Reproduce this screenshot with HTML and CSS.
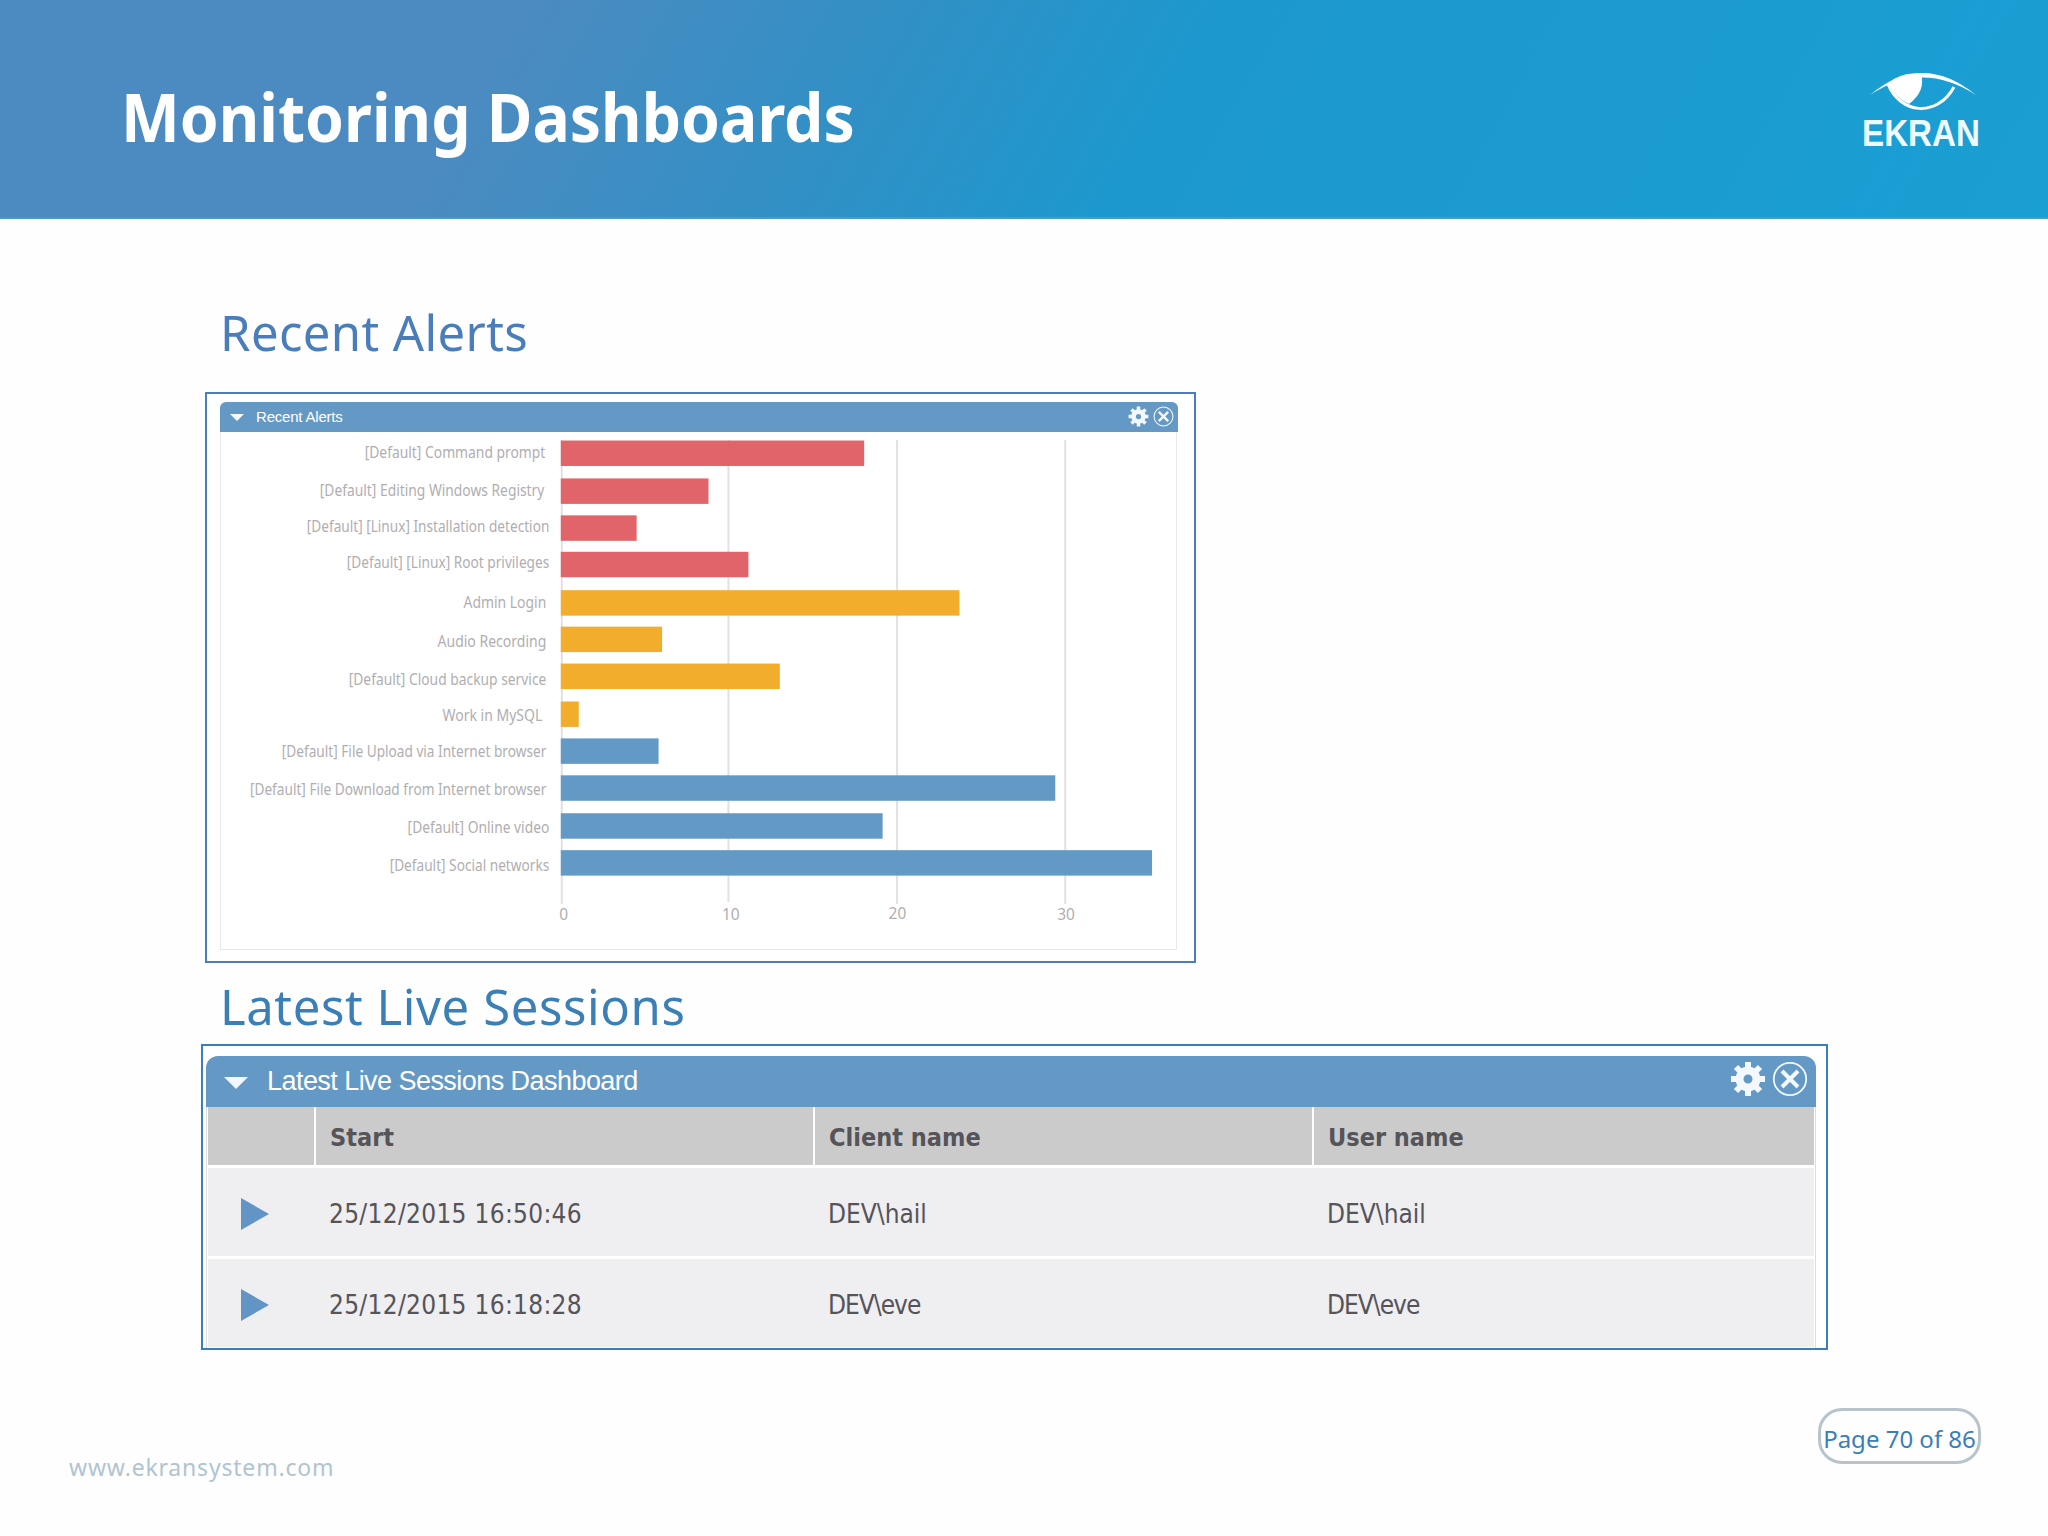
FILE: index.html
```html
<!DOCTYPE html>
<html lang="en">
<head>
    <meta charset="UTF-8">
    <title>Monitoring Dashboards</title>
    <link rel="stylesheet" href="styles.css">
</head>
<body>

<header class="header">
    <h1 class="title">Monitoring Dashboards</h1>
    <svg class="logo" width="124" height="96" viewBox="0 0 124 96">
        <path d="M11 26 Q63 -18 117 26 Q63 -9 11 26Z" fill="#fff"/>
        <path d="M29 14 Q44 2 62 5 Q67 22 50 35 Q37 30 29 14Z" fill="#fff"/>
        <path d="M29 15 C41 45 78 49 95 18" fill="none" stroke="#fff" stroke-width="3"/>
        <text x="3" y="77" textLength="118" lengthAdjust="spacingAndGlyphs">EKRAN</text>
    </svg>
</header>

<main class="content">
    <h2 class="subtitle alerts-title">Recent Alerts</h2>
    <section class="frame alerts">
        <div class="bar bar-small">
            <span class="caret"></span>
            <span class="bar-title">Recent Alerts</span>
            <svg class="icon" viewBox="0 0 36 36">
                <use href="#gear"/>
            </svg>
            <svg class="icon" viewBox="0 0 36 36">
                <use href="#close"/>
            </svg>
        </div>
        <svg class="chart" width="957" height="518" viewBox="220 432 957 518">
            <g class="grid">
                <path d="M561.5 440V905M728.5 440V903M897.5 440V905M1066 440V905"/>
            </g>
            <g fill="#e06469">
                <rect x="560.5" y="440.5" width="304" height="25.5"/>
                <rect x="560.5" y="478.5" width="148" height="25.5"/>
                <rect x="560.5" y="515.5" width="76" height="25.5"/>
                <rect x="560.5" y="552" width="188" height="25.5"/>
            </g>
            <g fill="#f2ad2c">
                <rect x="560.5" y="590.5" width="399.5" height="25.5"/>
                <rect x="560.5" y="627" width="101.5" height="25.5"/>
                <rect x="560.5" y="664" width="219.5" height="25.5"/>
                <rect x="560.5" y="702" width="18" height="25.5"/>
            </g>
            <g fill="#6399c5">
                <rect x="560.5" y="739" width="98" height="25.5"/>
                <rect x="560.5" y="776" width="495.5" height="25.5"/>
                <rect x="560.5" y="814" width="322.5" height="25.5"/>
                <rect x="560.5" y="851" width="592.5" height="25.5"/>
            </g>
            <g class="labels">
                <text x="364" y="458" textLength="181" lengthAdjust="spacingAndGlyphs">[Default] Command prompt</text>
                <text x="319" y="496" textLength="225" lengthAdjust="spacingAndGlyphs">[Default] Editing Windows Registry</text>
                <text x="306" y="532" textLength="243" lengthAdjust="spacingAndGlyphs">[Default] [Linux] Installation detection</text>
                <text x="346" y="568" textLength="203" lengthAdjust="spacingAndGlyphs">[Default] [Linux] Root privileges</text>
                <text x="463" y="608" textLength="83" lengthAdjust="spacingAndGlyphs">Admin Login</text>
                <text x="437" y="647" textLength="109" lengthAdjust="spacingAndGlyphs">Audio Recording</text>
                <text x="348" y="685" textLength="198" lengthAdjust="spacingAndGlyphs">[Default] Cloud backup service</text>
                <text x="442" y="722" textLength="100" lengthAdjust="spacingAndGlyphs">Work in MySQL</text>
                <text x="281" y="758" textLength="265" lengthAdjust="spacingAndGlyphs">[Default] File Upload via Internet browser</text>
                <text x="249" y="796" textLength="297" lengthAdjust="spacingAndGlyphs">[Default] File Download from Internet browser</text>
                <text x="407" y="834" textLength="142" lengthAdjust="spacingAndGlyphs">[Default] Online video</text>
                <text x="389" y="872" textLength="160" lengthAdjust="spacingAndGlyphs">[Default] Social networks</text>
                <text x="559" y="921">0</text>
                <text x="722" y="921">10</text>
                <text x="889" y="920">20</text>
                <text x="1058" y="921">30</text>
            </g>
        </svg>
    </section>

    <h2 class="subtitle sessions-title">Latest Live Sessions</h2>
    <section class="frame sessions">
        <div class="bar">
            <span class="caret"></span>
            <span class="bar-title">Latest Live Sessions Dashboard</span>
            <svg class="icon" viewBox="0 0 36 36">
                <use href="#gear"/>
            </svg>
            <svg class="icon" viewBox="0 0 36 36">
                <use href="#close"/>
            </svg>
        </div>
        <div class="table">
            <div class="row head">
                <span></span>
                <span>Start</span>
                <span>Client name</span>
                <span>User name</span>
            </div>
            <div class="row">
                <span><i class="play"></i></span>
                <span class="date">25/12/2015 16:50:46</span>
                <span>DEV\hail</span>
                <span>DEV\hail</span>
            </div>
            <div class="row">
                <span><i class="play"></i></span>
                <span class="date">25/12/2015 16:18:28</span>
                <span class="short">DEV\eve</span>
                <span class="short">DEV\eve</span>
            </div>
        </div>
    </section>
</main>

<footer class="footer">
    <span class="site">www.ekransystem.com</span>
    <span class="page">Page 70 of 86</span>
</footer>

<!-- shared icons -->
<svg class="defs">
    <symbol id="gear" viewBox="0 0 36 36">
        <g fill="none" stroke="#f2f8fd">
            <circle cx="18" cy="18" r="8.5" stroke-width="8"/>
            <path stroke-width="6" d="M18 1V7M18 29V35M1 18H7M29 18H35M6 6L10 10M26 26L30 30M30 6L26 10M10 26L6 30"/>
        </g>
    </symbol>
    <symbol id="close" viewBox="0 0 36 36">
        <g fill="none" stroke="#f2f8fd">
            <circle cx="18" cy="18" r="16.2" stroke-width="1.8"/>
            <path stroke-width="4" d="M10 10L26 26M26 10L10 26"/>
        </g>
    </symbol>
</svg>

</body>
</html>
```

FILE: styles.css
```css
* {
    box-sizing: border-box;
}

body {
    margin: 0;
    width: 2048px;
    height: 1536px;
    overflow: hidden;
    background-color: #fefefe;
    font-family: "Noto Sans", sans-serif;
}

.header {
    display: flex;
    justify-content: space-between;
    height: 219px;
    padding: 0 65px 0 121px;
    background: linear-gradient(120deg, #4c8bc1 24%, #3190c5 42%, #1d98ce 56%, #1a9fd3 100%);
    border-bottom: 2px solid #4a9cc0;
}

.title {
    margin: 69px 0 0;
    font-size: 67px;
    line-height: 94px;
    color: #fff;
    white-space: nowrap;
    transform: scaleX(0.931);
    transform-origin: left;
}

.logo {
    margin-top: 69px;
}

.logo text {
    font: bold 37px "Liberation Sans", sans-serif;
    fill: #eefaff;
}

.content {
    padding-left: 201px;
}

.subtitle {
    margin: 0 0 0 19px;
    font-size: 49px;
    font-weight: normal;
    line-height: 66px;
    color: #4a7ebb;
    white-space: nowrap;
}

.alerts-title {
    padding-top: 80px;
    height: 173px;
    letter-spacing: 0.4px;
}

.sessions-title {
    padding-top: 10px;
    height: 81px;
    color: #3a7fb5;
    letter-spacing: 0.6px;
}

.frame {
    border: 2px solid #4a7ebb;
    background-color: #fff;
    overflow: hidden;
}

.alerts {
    width: 991px;
    height: 571px;
    margin-left: 4px;
    padding: 8px 13px 0;
}

.sessions {
    width: 1627px;
    height: 306px;
    padding: 10px 10px 0 3px;
    border-color: #3a7fb5;
}

.bar {
    display: flex;
    align-items: center;
    height: 51px;
    padding: 0 8px 5px 18px;
    border-radius: 12px 12px 0 0;
    background-color: #6499c5;
    color: #fff;
    font-family: "Liberation Sans", sans-serif;
    font-size: 27px;
}

.caret {
    margin: 7px 19px 0 0;
    border: 12px solid transparent;
    border-top-color: #f2f8fd;
    border-bottom: 0;
}

.bar-title {
    flex: 1;
    padding-top: 4px;
    letter-spacing: -0.55px;
}

.icon {
    width: 36px;
    height: 36px;
    margin-left: 6px;
}

.bar-small {
    width: 958px;
    height: 30px;
    padding: 0 4px 2px 10px;
    border-radius: 6px 6px 0 0;
    font-size: 15px;
}

.bar-small .caret {
    margin: 3px 12px 0 0;
    border-width: 7px;
    border-bottom: 0;
}

.bar-small .bar-title {
    padding-top: 0;
    letter-spacing: -0.2px;
}

.bar-small .icon {
    width: 21px;
    height: 21px;
    margin-left: 4px;
}

.chart {
    display: block;
    border: 1px solid #e9e7ea;
    border-top: 0;
}

.grid {
    stroke: #e2e0e5;
    stroke-width: 2;
}

.labels {
    fill: #b0aeb1;
    font-size: 15.5px;
}

.table {
    padding: 0 1px 0 1px;
    border: solid #dcdce0;
    border-width: 0 1px;
    font-family: "DejaVu Sans Condensed", "DejaVu Sans", sans-serif;
    font-stretch: condensed;
    font-size: 26px;
    color: #555459;
}

.row {
    display: grid;
    grid-template-columns: 106px 499px 499px 1fr;
    height: 91px;
    border-bottom: 3px solid #fff;
    background-color: #efeef0;
}

.row span {
    display: flex;
    align-items: center;
    padding: 3px 0 0 15px;
}

.head {
    height: 61px;
    font-weight: bold;
    font-size: 25px;
    background-color: #cccbcc;
}

.head span + span {
    border-left: 2px solid #fff;
    padding-left: 14px;
}

.row .date {
    letter-spacing: 0.3px;
}

.row .short {
    letter-spacing: -1px;
}

.row .play {
    margin-left: 18px;
    border: 16px solid transparent;
    border-left: 28px solid #6294c5;
    border-right: 0;
}

.footer {
    display: flex;
    justify-content: space-between;
    align-items: flex-start;
    padding: 58px 67px 0 69px;
}

.site {
    margin-top: 42px;
    font-size: 23px;
    line-height: 34px;
    color: #b0c4d1;
    letter-spacing: 0.8px;
}

.page {
    width: 163px;
    height: 56px;
    border: 3px solid #b8c4cb;
    border-radius: 24px;
    font-size: 24px;
    line-height: 55px;
    text-align: center;
    color: #3a7fb8;
    white-space: nowrap;
}

.defs {
    display: none;
}
```
